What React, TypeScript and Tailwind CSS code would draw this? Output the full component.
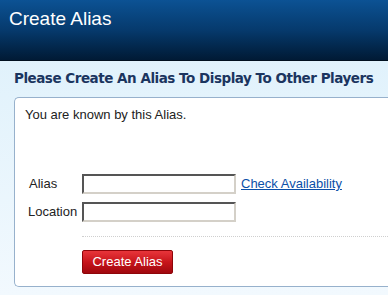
export default function App() {
  return (
    <div className="w-[388px] h-[295px] overflow-hidden bg-gradient-to-b from-[#dcf0fb] to-[#f2f9fe] font-['Liberation_Sans',Arial,sans-serif]">
      {/* Header */}
      <div className="h-[61px] bg-gradient-to-b from-[#0c5294] via-[#063a6d] to-[#011a35] border-b border-[#01101f] px-[9px] pt-[8px]">
        <h1 className="text-white text-[19px] leading-[22px]">Create Alias</h1>
      </div>

      {/* Section title */}
      <div className="pl-[14px] pt-[9px] h-[36px]">
        <h2 className="text-[#1b355f] font-bold text-[13.5px] leading-[16px] font-['DejaVu_Sans',Verdana,sans-serif] tracking-[-0.48px]">
          Please Create An Alias To Display To Other Players
        </h2>
      </div>

      {/* Form box */}
      <div className="ml-[14px] h-[190px] bg-white border border-r-0 border-[#97b1cc] rounded-l-[5px] pl-[10px] pt-[9px]">
        <p className="text-[#222] text-[13px] leading-[15px]">You are known by this Alias.</p>

        <div className="mt-[52px] flex flex-col gap-[8px]">
          <div className="flex items-center">
            <span className="w-[57px] pl-[4px] text-[13px] text-[#222]">Alias</span>
            <input className="w-[154px] h-[20px] border-2 border-t-[#555] border-l-[#555] border-b-[#d4d0c8] border-r-[#d4d0c8] bg-white outline-none" />
            <a href="#" className="ml-[5px] text-[13px] text-[#0b4fa8] underline">
              Check Availability
            </a>
          </div>
          <div className="flex items-center">
            <span className="w-[57px] pl-[3px] text-[13px] text-[#222]">Location</span>
            <input className="w-[154px] h-[20px] border-2 border-t-[#555] border-l-[#555] border-b-[#d4d0c8] border-r-[#d4d0c8] bg-white outline-none" />
          </div>
        </div>

        <div className="ml-[57px] mt-[14px] border-t border-dotted border-[#cfcfcf]" />

        <button className="ml-[57px] mt-[13px] w-[91px] h-[24px] rounded-[2px] border border-[#8e0509] bg-gradient-to-b from-[#e8343a] via-[#c8141b] to-[#a0080e] text-white text-[13px] leading-[14px]">
          Create Alias
        </button>
      </div>
    </div>
  );
}
